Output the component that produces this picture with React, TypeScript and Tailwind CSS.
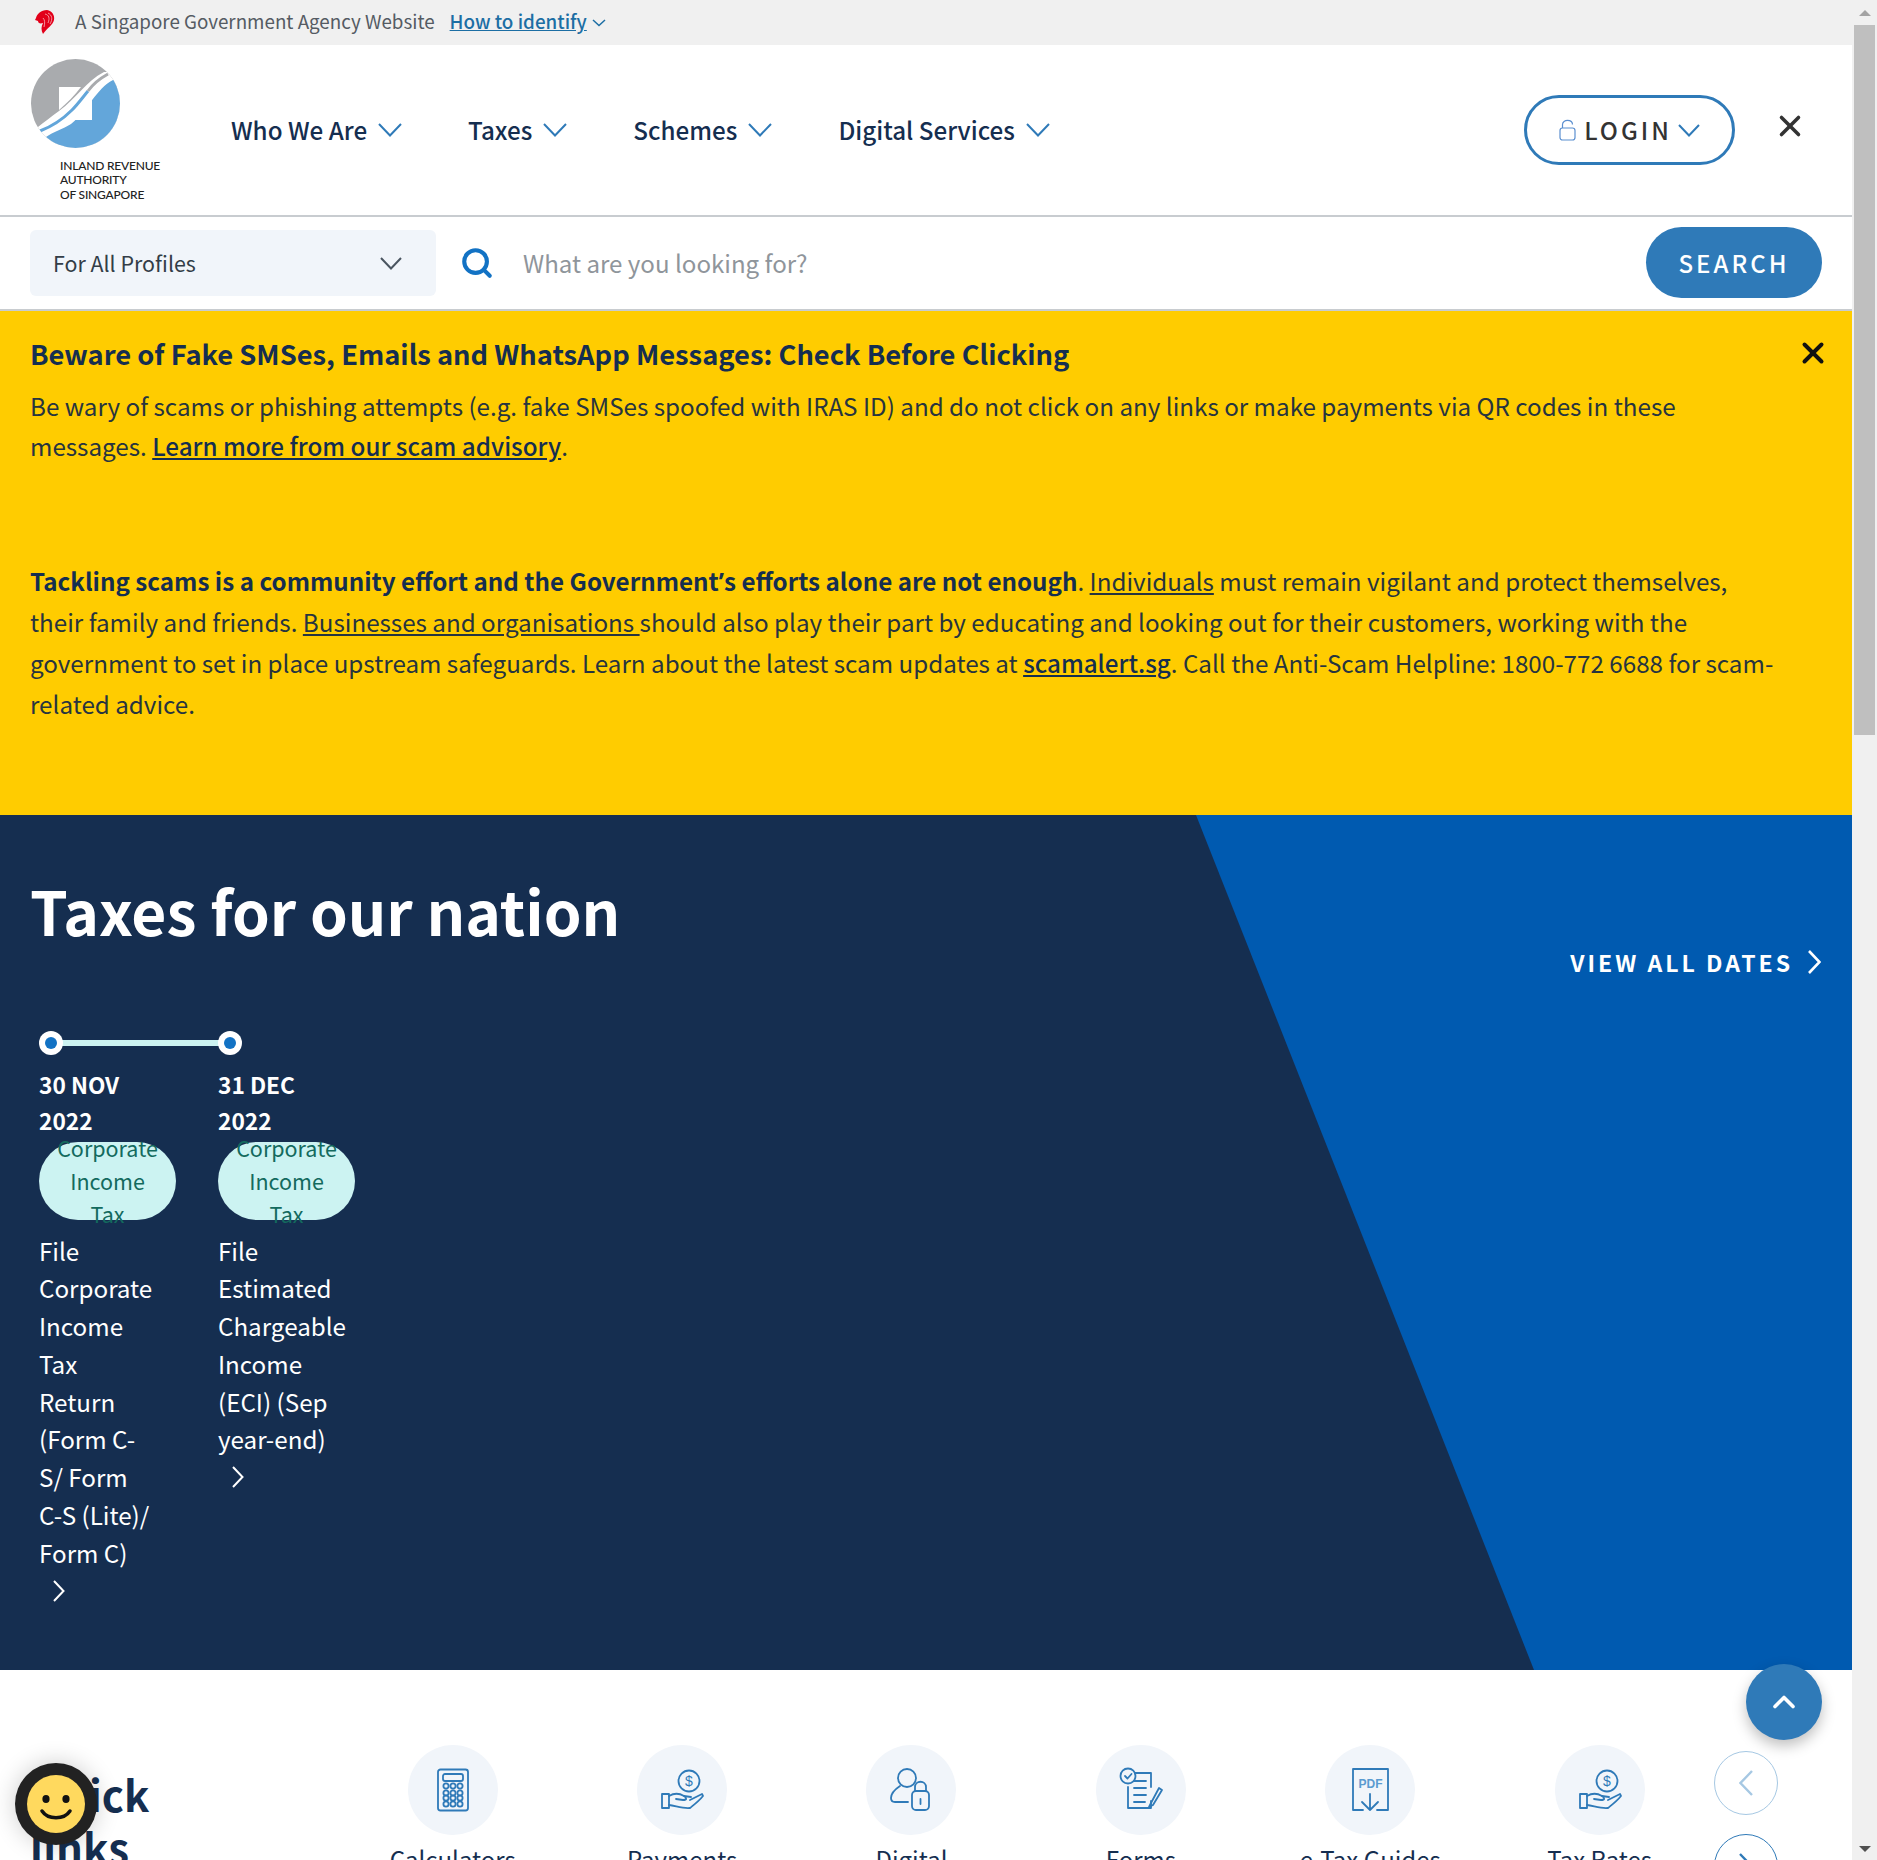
import React from 'react';
import { ChevronUp, Search, X } from 'lucide-react';

const NAV_ITEMS = ['Who We Are', 'Taxes', 'Schemes', 'Digital Services'];

const DATES = [
  {
    day: '30 NOV',
    year: '2022',
    tag: 'Corporate Income Tax',
    text: 'File Corporate Income Tax Return (Form C-S/ Form C-S (Lite)/ Form C)',
  },
  {
    day: '31 DEC',
    year: '2022',
    tag: 'Corporate Income Tax',
    text: 'File Estimated Chargeable Income (ECI) (Sep year-end)',
  },
];

// lucide's chevrons have too much padding for these wide, flat carets
const Chev = ({ w, h, sw = 2, className = '' }: { w: number; h: number; sw?: number; className?: string }) => (
  <svg width={w} height={h} viewBox={`0 0 ${w} ${h}`} fill="none" stroke="currentColor" strokeWidth={sw} className={`shrink-0 ${className}`}>
    <path d={`M1 1 L${w / 2} ${h - 1.5} L${w - 1} 1`} />
  </svg>
);

const ChevSide = ({ w, h, sw = 2, left = false, className = '' }: { w: number; h: number; sw?: number; left?: boolean; className?: string }) => (
  <svg width={w} height={h} viewBox={`0 0 ${w} ${h}`} fill="none" stroke="currentColor" strokeWidth={sw} className={`shrink-0 ${className}`}>
    <path d={left ? `M${w - 1} 1 L1.5 ${h / 2} L${w - 1} ${h - 1}` : `M1 1 L${w - 1.5} ${h / 2} L1 ${h - 1}`} />
  </svg>
);

const Lion = () => (
  <svg width="20" height="24" viewBox="0 0 20 24" className="shrink-0">
    <path
      d="M1 8 C2 4 6 0 12 0 C17 1 20 5 19 10 C18 15 12 18 8 24 C6 20 6 17 8 13 C5 14 3 13 3 11 L0 10 Z"
      fill="#e2001a"
    />
    <path d="M10 4 C14 5 15 8 13 13 M13 3 C17 5 18 9 15 14 M8 8 C10 10 10 13 9 17" fill="none" stroke="#f5a3ac" strokeWidth="0.9" />
  </svg>
);

const IrasLogo = () => (
  <svg width="89" height="89" viewBox="0 0 89 89">
    <clipPath id="iras-disc">
      <circle cx="44.5" cy="44.5" r="44.5" />
    </clipPath>
    <g clipPath="url(#iras-disc)">
      <rect width="89" height="89" fill="#a9abae" />
      <path d="M73 13 C55 22 45 40 28 52 C20 58 13 63 7 68 L7 95 L95 95 L95 13 Z" fill="#fff" />
      <path d="M82 21 C65 30 58 50 40 65 C32 70 22 73 15 78 L15 95 L95 95 L95 21 Z" fill="#63a6da" />
      <path d="M28 28 L50 28 C44 36 36 44 28 51 Z" fill="#fff" />
      <path d="M61 38 L61 61 L37 61 C46 54 54 46 61 38 Z" fill="#fff" />
      <path d="M9 72 C22 67 32 60 41 51 C47 45 52 38 57 32" fill="none" stroke="#63a6da" strokeWidth="3" />
      <path d="M57 32 C62 25 68 20 77 15" fill="none" stroke="#a9abae" strokeWidth="3" />
    </g>
  </svg>
);

const iconStroke = { fill: 'none', stroke: '#2f7ab8', strokeWidth: 1.8, strokeLinecap: 'round', strokeLinejoin: 'round' } as const;

const CalculatorIcon = () => (
  <svg width="46" height="46" viewBox="0 0 46 46" {...iconStroke}>
    <rect x="8" y="2.5" width="30" height="41" rx="2.5" />
    <rect x="13" y="7" width="20" height="7" rx="2" />
    {[19, 26, 31, 37].flatMap((cy) =>
      [16, 23, 30].map((cx) => <circle key={`${cx}-${cy}`} cx={cx} cy={cy} r="2.6" />),
    )}
  </svg>
);

const HandCoinIcon = () => (
  <svg width="46" height="46" viewBox="0 0 46 46" {...iconStroke}>
    <circle cx="30" cy="14" r="10.5" />
    <text x="30" y="19" textAnchor="middle" fontSize="14" fill="#2f7ab8" stroke="none" fontFamily="Liberation Sans">$</text>
    <rect x="3" y="27" width="7" height="14" />
    <path d="M10 29 C15 26 20 26 25 29 L32 30 M31 33 L43 27 L44 29 C40 34 36 37 31 41 C25 42 17 39 10 38" />
    <path d="M25 29 C28 31 28 33 24 33 L17 32" />
  </svg>
);

const UserLockIcon = () => (
  <svg width="46" height="46" viewBox="0 0 46 46" {...iconStroke}>
    <circle cx="19" cy="11" r="9" />
    <path d="M12 19 C6 23 3 27 3 31 C3 34 5 35 7 35 L20 35" />
    <rect x="24" y="24" width="17" height="19" rx="4" />
    <path d="M27 24 L27 20 C27 13 38 13 38 20 L38 24" />
    <path d="M32.5 32 L32.5 37" />
  </svg>
);

const FormsIcon = () => (
  <svg width="46" height="46" viewBox="0 0 46 46" {...iconStroke}>
    <path d="M15 6 L33 6 L33 20 M33 34 L33 41 L10 41 L10 20" />
    <circle cx="10" cy="9" r="7.5" fill="#f1f5fa" />
    <path d="M7 9 L9.5 11.5 L13.5 7" />
    <path d="M16 14 L28 14 M16 21 L28 21 M16 28 L28 28 M16 35 L27 35" />
    <path d="M33 36 L31 40 L35 38 L44 23 L41 21 Z" />
  </svg>
);

const PdfIcon = () => (
  <svg width="46" height="46" viewBox="0 0 46 46" {...iconStroke}>
    <path d="M30 43 L41 43 L41 2 L6 2 L6 43 L16 43" />
    <text x="23.5" y="21" textAnchor="middle" fontSize="12" fontWeight="700" fill="#5a9bd0" stroke="none" fontFamily="Liberation Sans">PDF</text>
    <path d="M23 27 L23 43 M15 35 L23 43 L31 35" />
  </svg>
);

const QUICK_LINKS = [
  { label: 'Calculators', icon: <CalculatorIcon /> },
  { label: 'Payments', icon: <HandCoinIcon /> },
  { label: 'Digital', icon: <UserLockIcon /> },
  { label: 'Forms', icon: <FormsIcon /> },
  { label: 'e-Tax Guides', icon: <PdfIcon /> },
  { label: 'Tax Rates', icon: <HandCoinIcon /> },
];

export default function App() {
  return (
    <div className="relative flex h-[1860px] w-[1877px] overflow-hidden bg-white font-['Noto_Sans_CJK_SC','Noto_Sans',sans-serif] text-[#152e50]">
      <div className="w-[1852px] shrink-0">
        {/* masthead */}
        <div className="flex h-[45px] items-center bg-[#f0f0f0] pb-[2px] pl-[35px] text-[18.8px] text-[#555b63]">
          <Lion />
          <span className="ml-[20px]">A Singapore Government Agency Website</span>
          <a className="ml-[15px] font-medium text-[#1c6ea4] underline">How to identify</a>
          <Chev w={14} h={8} sw={1.5} className="mt-[2px] ml-[5px] text-[#1c6ea4]" />
        </div>

        {/* main nav */}
        <div className="flex h-[172px] items-start border-b-2 border-[#c8ccd0] pl-[31px] pr-[45px]">
          <div className="w-[190px] pt-[14px]">
            <IrasLogo />
            <div className="mt-[11px] ml-[29px] font-['Lato',sans-serif] text-[12px] leading-[14.3px] font-medium tracking-[-0.2px] text-[#222]">
              INLAND REVENUE
              <br />
              AUTHORITY
              <br />
              OF SINGAPORE
            </div>
          </div>
          <nav className="ml-[10px] flex h-[172px] items-center gap-[66px] pb-[2px]">
            {NAV_ITEMS.map((item) => (
              <div key={item} className="flex items-center text-[24.2px] font-medium">
                {item}
                <Chev w={24} h={14} className="ml-[11px] text-[#2f7ab8]" />
              </div>
            ))}
          </nav>
          <div className="ml-auto flex items-center pt-[50px]">
            <button className="flex h-[70px] w-[211px] items-center justify-center rounded-full border-[3px] border-[#2f7ab8] text-[24px] font-medium tracking-[3px] text-[#333]">
              <svg width="17" height="22" viewBox="0 0 17 22" fill="none" stroke="#5b8fd0" strokeWidth="1.2" className="mr-[8px]">
                <rect x="1" y="9" width="15" height="12" rx="2.5" />
                <path d="M3.5 9 L3.5 5.5 C3.5 0 13.5 0 13.5 5.5" />
              </svg>
              LOGIN
              <Chev w={22} h={13} className="ml-[6px] text-[#2f7ab8]" />
            </button>
            <X size={34} strokeWidth={2.5} className="mb-[8px] ml-[38px] text-[#333]" />
          </div>
        </div>

        {/* search */}
        <div className="flex h-[94px] items-center border-b-2 border-[#c8ccd0] pl-[30px] pr-[30px]">
          <div className="flex h-[66px] w-[406px] items-center justify-between rounded-[6px] bg-[#f1f5fa] pl-[23px] pr-[34px] text-[21.4px] text-[#333d47]">
            For All Profiles
            <Chev w={22} h={13} sw={2} className="text-[#4a5560]" />
          </div>
          <Search size={34} strokeWidth={2.9} className="ml-[24px] text-[#1272c4]" />
          <span className="ml-[29px] text-[24.1px] text-[#8f959b]">What are you looking for?</span>
          <button className="mb-[1px] ml-auto h-[71px] w-[176px] rounded-full bg-[#2f7ab8] text-[24px] font-medium tracking-[3px] text-white">
            SEARCH
          </button>
        </div>

        {/* scam notice */}
        <div className="relative h-[504px] bg-[#ffcc00] px-[30px] pt-[21px] text-[24.2px] leading-[40.6px] text-[#27343f]">
          <h3 className="text-[27.3px] leading-[42px] font-bold text-[#152e50]">
            Beware of Fake SMSes, Emails and WhatsApp Messages: Check Before Clicking
          </h3>
          <X size={34} strokeWidth={2.8} className="absolute top-[25px] right-[22px] text-[#111]" />
          <p className="mt-[11.6px] w-[1752px]">
            Be wary of scams or phishing attempts (e.g. fake SMSes spoofed with IRAS ID) and do not click on any links or make
            payments via QR codes in these messages.{' '}
            <a className="font-medium text-[#152e50] underline">Learn more from our scam advisory</a>.
          </p>
          <p className="mt-[94px] w-[1752px]">
            <b className="text-[#152e50]">
              Tackling scams is a community effort and the Government<span className="font-['Noto_Sans',sans-serif]">’</span>s
              efforts alone are not enough
            </b>
            . <a className="underline">Individuals</a> must remain vigilant and protect themselves, their family and friends.{' '}
            <a className="underline">Businesses and organisations </a>should also play their part by educating and looking out for
            their customers, working with the government to set in place upstream safeguards. Learn about the latest scam updates
            at <a className="font-medium text-[#152e50] underline">scamalert.sg</a>. Call the Anti-Scam Helpline: 1800-772 6688 for
            scam-related advice.
          </p>
        </div>

        {/* hero */}
        <div className="relative h-[855px] overflow-hidden bg-[#152e50] text-white">
          <div className="absolute inset-0 bg-[#005ab0] [clip-path:polygon(1196px_0,100%_0,100%_100%,1534px_100%)]" />
          <div className="relative flex items-start justify-between pt-[53px] pr-[31px] pl-[30px]">
            <h1 className="text-[60.5px] leading-[84px] font-bold">Taxes for our nation</h1>
            <div className="mt-[77px] flex items-center text-[23px] font-semibold tracking-[3px]">
              VIEW ALL DATES
              <ChevSide w={13} h={24} sw={2.6} className="ml-[15px]" />
            </div>
          </div>
          <div className="relative mt-[51px] flex items-start pl-[39px]">
            {DATES.map((d, i) => (
              <div key={d.day} className="w-[179px] shrink-0">
                <div className="relative h-[24px]">
                  {i === 0 && <div className="absolute top-[9px] left-[12px] h-[6px] w-[179px] bg-[#ccf3f2]" />}
                  <div className="relative flex h-[24px] w-[24px] items-center justify-center rounded-full bg-white">
                    <div className="h-[12px] w-[12px] rounded-full bg-[#1272c4]" />
                  </div>
                </div>
                <div className="mt-[12px] w-[137px] text-[22.7px] leading-[36px] font-bold">
                  {d.day}
                  <br />
                  {d.year}
                </div>
                <div className="mt-[3px] flex h-[78px] w-[137px] items-center justify-center rounded-[39px] bg-[#ccf3f2] px-[12px] text-center text-[21.5px] leading-[33px] text-[#136a5e]">
                  {d.tag}
                </div>
                <p className="mt-[12px] w-[115px] text-[24.2px] leading-[37.8px]">{d.text}</p>
                <ChevSide w={12} h={22} sw={2} className="mt-[8px] ml-[14px]" />
              </div>
            ))}
          </div>
        </div>

        {/* quick links */}
        <div className="relative flex pt-[75px] pl-[30px]">
          <h2 className="w-[308px] shrink-0 pt-[22px] text-[42px] leading-[53px] font-bold">
            Quick
            <br />
            links
          </h2>
          <div className="flex">
            {QUICK_LINKS.map((q) => (
              <div key={q.label} className="flex w-[229.4px] shrink-0 flex-col items-center text-[24px]">
                <div className="flex h-[90px] w-[90px] items-center justify-center rounded-full bg-[#f1f5fa]">{q.icon}</div>
                <span className="mt-[6px]">{q.label}</span>
              </div>
            ))}
          </div>
          <div className="absolute top-[81px] left-[1714px] flex flex-col gap-[19px]">
            <div className="flex h-[64px] w-[64px] items-center justify-center rounded-full border border-[#a6c8e3] text-[#a6c8e3]">
              <ChevSide left w={14} h={26} sw={2.4} />
            </div>
            <div className="flex h-[64px] w-[64px] items-center justify-center rounded-full border border-[#2f7ab8] text-[#2f7ab8]">
              <ChevSide w={14} h={26} sw={2.4} />
            </div>
          </div>
        </div>
      </div>

      {/* scrollbar */}
      <div className="flex w-[25px] flex-col items-center bg-[#f0f0f0]">
        <div className="mt-[10px] h-0 w-0 border-x-[6px] border-b-[6px] border-x-transparent border-b-[#a3a3a3]" />
        <div className="mt-[9px] h-[710px] w-[21px] bg-[#bfbfbf]" />
        <div className="mt-auto mb-[8px] h-0 w-0 border-x-[6px] border-t-[6px] border-x-transparent border-t-[#505050]" />
      </div>

      {/* floating buttons */}
      <div className="absolute top-[1664px] left-[1746px] flex h-[76px] w-[76px] items-center justify-center rounded-full bg-[#2f7ab8] text-white shadow-[0_6px_14px_rgba(0,0,0,0.25)]">
        <ChevronUp size={36} strokeWidth={2.4} />
      </div>
      <div className="absolute top-[1763px] left-[15px] flex h-[82px] w-[82px] items-center justify-center rounded-full bg-[#222] shadow-[0_0_24px_rgba(0,0,0,0.2)]">
        <div className="relative h-[58px] w-[58px] rounded-full bg-[#ffd95e]">
          <svg width="58" height="58" viewBox="0 0 58 58">
            <ellipse cx="19" cy="24" rx="3.6" ry="4" fill="#111" />
            <ellipse cx="39" cy="24" rx="3.6" ry="4" fill="#111" />
            <path d="M15 36 C21 45 37 45 43 36" fill="none" stroke="#111" strokeWidth="3.5" strokeLinecap="round" />
          </svg>
        </div>
      </div>
    </div>
  );
}
